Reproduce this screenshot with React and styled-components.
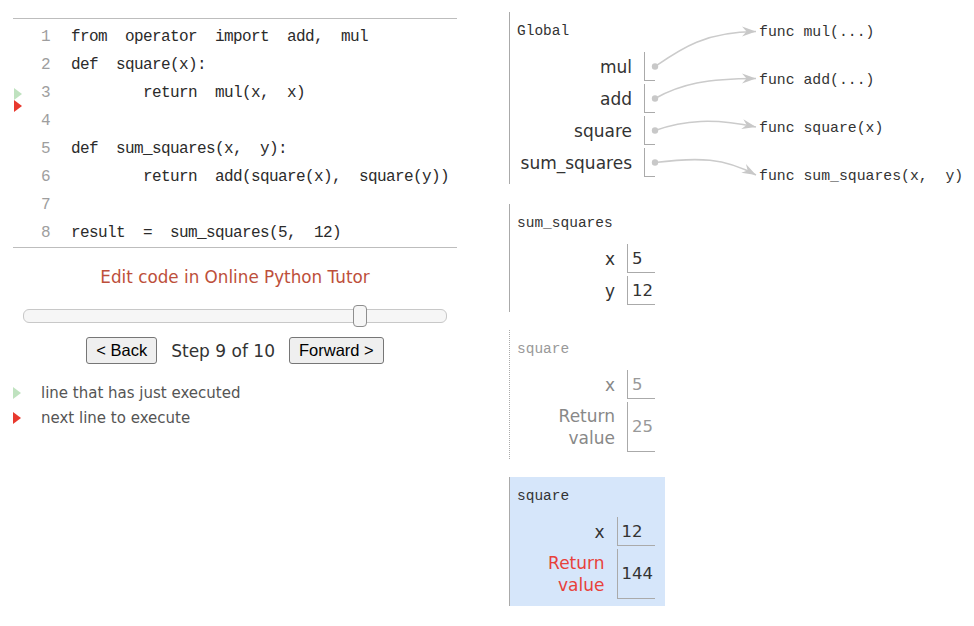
import React from "react";
import styled, { createGlobalStyle, css } from "styled-components";

const GlobalStyle = createGlobalStyle`
  html, body { margin: 0; padding: 0; background: #fff; }
`;

const SANS = `"DejaVu Sans", Verdana, sans-serif`;
const MONO = `"Liberation Mono", "DejaVu Sans Mono", monospace`;

const Page = styled.div`
  display: flex;
  align-items: flex-start;
  gap: 52px;
  padding: 12px 0 0 13px;
`;

const LeftCol = styled.div`
  width: 444px;
  margin-top: 6px;
  display: flex;
  flex-direction: column;
`;

const CodeBox = styled.div`
  border-top: 1px solid #bdbdbd;
  border-bottom: 1px solid #bdbdbd;
  padding-top: 4px;
`;

const CodeLine = styled.div`
  display: grid;
  grid-template-columns: 28px 9px 1fr;
  grid-template-rows: 28px;
  height: 28px;
  align-items: center;
  font-family: ${MONO};
  font-size: 16px;
  letter-spacing: -0.6px;
  white-space: pre;
`;

const Gutter = styled.div`
  align-self: stretch;
  display: flex;
  flex-direction: column;
  padding: 9px 0 0 1px;
  overflow: visible;
`;

const Arrow = styled.span`
  display: block;
  width: 0;
  height: 0;
  border-top: 6px solid transparent;
  border-bottom: 6px solid transparent;
  border-left: 8px solid ${(p) => (p.$kind === "next" ? "#e8392e" : "#bfe2bf")};
  flex: none;
`;

const LineNo = styled.span`
  color: #9e9e9e;
  text-align: right;
`;

const CodeText = styled.span`
  padding-left: 21px;
  color: #2b2b2b;
`;

const EditLink = styled.div`
  margin-top: 18px;
  text-align: center;
  font-family: ${SANS};
  font-size: 16.8px;
  line-height: 22px;
  color: #bd4f3b;
`;

const SliderWrap = styled.div`
  position: relative;
  margin: 17px 10px 0;
  height: 22px;
  display: flex;
  align-items: center;
`;

const Track = styled.div`
  flex: 1;
  height: 14px;
  box-sizing: border-box;
  border: 1px solid #c8c8c8;
  border-radius: 6px;
  background: #f6f6f6;
`;

const Handle = styled.div`
  position: absolute;
  top: 0;
  left: ${(p) => p.$pct}%;
  width: 14px;
  height: 22px;
  box-sizing: border-box;
  border: 1px solid #8e8e8e;
  border-radius: 4px;
  background: #f6f6f6;
`;

const Controls = styled.div`
  margin-top: 10px;
  display: flex;
  justify-content: center;
  align-items: center;
  gap: 14px;
`;

const NavButton = styled.button`
  height: 27px;
  padding: 0 9px;
  font-family: "Liberation Sans", Arial, sans-serif;
  font-size: 16.5px;
  color: #000;
  background: #efefef;
  border: 1px solid #767676;
  border-radius: 3px;
`;

const StepText = styled.span`
  font-family: ${SANS};
  font-size: 17px;
  color: #333;
`;

const Legend = styled.div`
  margin-top: 19px;
  display: flex;
  flex-direction: column;
  gap: 5px;
`;

const LegendItem = styled.div`
  display: flex;
  align-items: center;
  height: 20px;
  font-family: ${SANS};
  font-size: 15px;
  color: #555;
  ${Arrow} {
    margin-right: 20px;
  }
`;

const RightCol = styled.div`
  display: flex;
  flex-direction: column;
  align-items: flex-start;
  gap: 18px;
`;

const GlobalSection = styled.div`
  position: relative;
  display: flex;
  align-items: flex-start;
`;

const Frame = styled.div`
  width: 156px;
  box-sizing: border-box;
  display: flex;
  flex-direction: column;
  padding: 9px 10px 7px 7px;
  border-left: 1px ${(p) => (p.$faded ? "dotted" : "solid")} #aaa;
  background: ${(p) => (p.$active ? "#d6e6fa" : "transparent")};
`;

const FrameTitle = styled.div`
  font-family: ${MONO};
  font-size: 14.5px;
  line-height: 20px;
  color: ${(p) => (p.$faded ? "#999" : "#333")};
`;

const VarGrid = styled.div`
  margin-top: 8px;
  align-self: flex-end;
  display: grid;
  grid-template-columns: auto auto;
  column-gap: 12px;
`;

const VarName = styled.div`
  align-self: center;
  margin-top: 3px;
  padding: 3px 0;
  text-align: right;
  font-family: ${SANS};
  font-size: 17px;
  line-height: 22px;
  color: ${(p) => (p.$ret ? (p.$faded ? "#888" : "#e8413a") : p.$faded ? "#888" : "#333")};
`;

const VarCell = styled.div`
  margin-top: 3px;
  min-height: 29px;
  box-sizing: border-box;
  border-left: 1px solid #aaa;
  border-bottom: 1px solid #aaa;
  display: flex;
  align-items: center;
  font-family: ${SANS};
  font-size: 16.5px;
  color: ${(p) => (p.$faded ? "#999" : "#333")};
  ${(p) =>
    p.$pointer
      ? css`
          width: 11px;
        `
      : css`
          padding: 0 2px 0 4px;
        `}
`;

const Heap = styled.div`
  margin-left: 94px;
  display: flex;
  flex-direction: column;
  padding-top: 10px;
  gap: 28px;
`;

const HeapObj = styled.div`
  font-family: ${MONO};
  font-size: 14.8px;
  line-height: 20px;
  color: #333;
  white-space: pre;
`;

const Overlay = styled.svg`
  position: absolute;
  left: 0;
  top: 0;
  width: 100%;
  height: 100%;
  overflow: visible;
  pointer-events: none;
`;

const code = [
  "from  operator  import  add,  mul",
  "def  square(x):",
  "        return  mul(x,  x)",
  "",
  "def  sum_squares(x,  y):",
  "        return  add(square(x),  square(y))",
  "",
  "result  =  sum_squares(5,  12)",
];

const globals = ["mul", "add", "square", "sum_squares"];
const heap = ["func mul(...)", "func add(...)", "func square(x)", "func sum_squares(x,  y)"];

const links = [
  { from: [146, 54.5], d: "M146,54.5 C170,38 195,19.5 247,19.5" },
  { from: [146, 86.5], d: "M146,86.5 C172,72 198,66.5 247,66.5" },
  { from: [146, 118.5], d: "M146,118.5 C175,108 205,106 247,115" },
  { from: [146, 150.5], d: "M146,150.5 C190,145 215,146 247,163" },
];

function StackFrame({ title, vars, faded, active }) {
  return (
    <Frame $faded={faded} $active={active}>
      <FrameTitle $faded={faded}>{title}</FrameTitle>
      <VarGrid>
        {vars.map((v) => (
          <React.Fragment key={v.name}>
            <VarName $faded={faded} $ret={v.ret}>
              {v.ret ? (
                <>
                  Return
                  <br />
                  value
                </>
              ) : (
                v.name
              )}
            </VarName>
            <VarCell $faded={faded} $pointer={v.pointer}>
              {v.value}
            </VarCell>
          </React.Fragment>
        ))}
      </VarGrid>
    </Frame>
  );
}

export default function App() {
  const sliderValue = 7;
  const sliderMax = 9;
  return (
    <>
      <GlobalStyle />
      <Page>
        <LeftCol>
          <CodeBox>
            {code.map((line, i) => (
              <CodeLine key={i}>
                <Gutter>
                  {i === 2 && (
                    <>
                      <Arrow $kind="done" />
                      <Arrow $kind="next" />
                    </>
                  )}
                </Gutter>
                <LineNo>{i + 1}</LineNo>
                <CodeText>{line}</CodeText>
              </CodeLine>
            ))}
          </CodeBox>
          <EditLink>Edit code in Online Python Tutor</EditLink>
          <SliderWrap>
            <Track />
            <Handle $pct={(sliderValue / sliderMax) * 100} />
          </SliderWrap>
          <Controls>
            <NavButton>&lt; Back</NavButton>
            <StepText>Step 9 of 10</StepText>
            <NavButton>Forward &gt;</NavButton>
          </Controls>
          <Legend>
            <LegendItem>
              <Arrow $kind="done" />
              line that has just executed
            </LegendItem>
            <LegendItem>
              <Arrow $kind="next" />
              next line to execute
            </LegendItem>
          </Legend>
        </LeftCol>

        <RightCol>
          <GlobalSection>
            <StackFrame
              title="Global"
              vars={globals.map((g) => ({ name: g, pointer: true }))}
            />
            <Heap>
              {heap.map((h) => (
                <HeapObj key={h}>{h}</HeapObj>
              ))}
            </Heap>
            <Overlay>
              <defs>
                <marker
                  id="head"
                  viewBox="0 0 15 11"
                  markerWidth="15"
                  markerHeight="11"
                  refX="14"
                  refY="5.5"
                  orient="auto"
                  markerUnits="userSpaceOnUse"
                >
                  <path d="M0,0.5 L14,5.5 L0,10.5 L4.5,5.5 Z" fill="#c8c8c8" />
                </marker>
              </defs>
              {links.map((l, i) => (
                <g key={i}>
                  <path d={l.d} fill="none" stroke="#cbcbcb" strokeWidth="1.6" markerEnd="url(#head)" />
                  <circle cx={l.from[0]} cy={l.from[1]} r="3.2" fill="#c8c8c8" />
                </g>
              ))}
            </Overlay>
          </GlobalSection>

          <StackFrame
            title="sum_squares"
            vars={[
              { name: "x", value: "5" },
              { name: "y", value: "12" },
            ]}
          />
          <StackFrame
            title="square"
            faded
            vars={[
              { name: "x", value: "5" },
              { name: "ret", ret: true, value: "25" },
            ]}
          />
          <StackFrame
            title="square"
            active
            vars={[
              { name: "x", value: "12" },
              { name: "ret", ret: true, value: "144" },
            ]}
          />
        </RightCol>
      </Page>
    </>
  );
}
